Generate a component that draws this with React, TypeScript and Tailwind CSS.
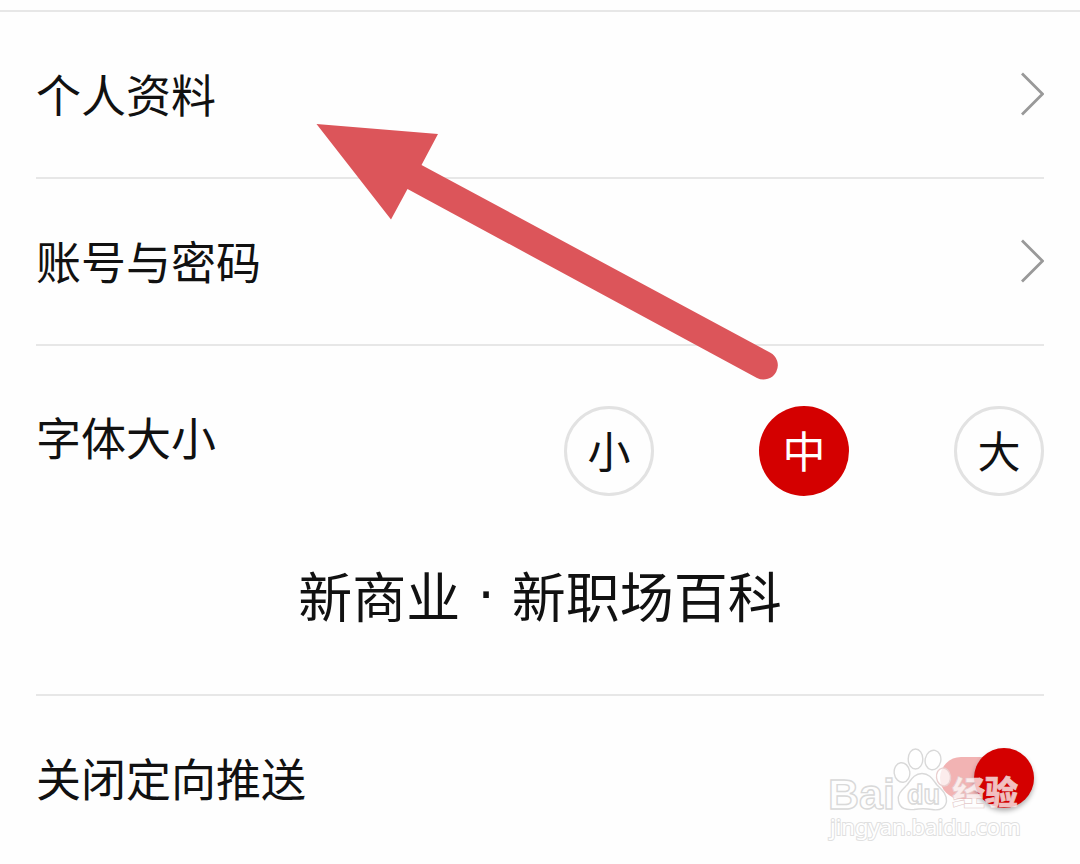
import { useState } from "react";

const SIZES = ["小", "中", "大"];

function LinkRow({ label }: { label: string }) {
  return (
    <a
      href="#"
      className="flex items-center justify-between border-b-2 border-[#e7e7e7] pt-[49px] pb-[51px] text-[45px] leading-[65px] text-[#111111]"
    >
      <span>{label}</span>
      <svg className="h-[44px] w-[24px]" viewBox="0 0 24 44" fill="none" stroke="#999999" strokeWidth="2.8" aria-hidden="true">
        <path d="M2 1.5 L22.5 22 L2 42.5" />
      </svg>
    </a>
  );
}

function SizeRow() {
  const [size, setSize] = useState("中");
  return (
    <section className="border-b-2 border-[#e7e7e7] pt-[58px] pb-[62px] text-[#111111]">
      <div className="flex items-start justify-between">
        <h2 className="text-[45px] leading-[65px]">字体大小</h2>
        <div className="mt-[2px] flex gap-[105px]" role="group" aria-label="字体大小">
          {SIZES.map((s) => (
            <button
              key={s}
              type="button"
              aria-pressed={s === size}
              onClick={() => setSize(s)}
              className={
                s === size
                  ? "flex size-[90px] items-center justify-center rounded-full bg-[#d40000] pb-[4px] text-[43px] leading-none text-white"
                  : "flex size-[90px] items-center justify-center rounded-full border-[3px] border-[#e2e2e2] pb-[4px] text-[43px] leading-none"
              }
            >
              {s}
            </button>
          ))}
        </div>
      </div>
      <p className="mt-[62px] flex h-[74px] items-center justify-center text-[54px] leading-[74px]">
        <span>新商业</span>
        <span className="font-['DejaVu_Sans',sans-serif] whitespace-pre"> · </span>
        <span>新职场百科</span>
      </p>
    </section>
  );
}

function PushRow() {
  const [on, setOn] = useState(true);
  return (
    <label className="flex items-center justify-between py-[49px] text-[45px] leading-[65px] text-[#111111]">
      <span>关闭定向推送</span>
      <span className="mr-[10px] flex h-[60px] w-[94px] items-center">
        <input type="checkbox" role="switch" className="sr-only" checked={on} onChange={() => setOn(!on)} />
        <span
          className={
            on
              ? "flex h-[42px] w-full items-center justify-end rounded-full bg-[#f2b3b3]"
              : "flex h-[42px] w-full items-center justify-start rounded-full bg-[#cccccc]"
          }
        >
          <span
            className={
              on
                ? "size-[60px] rounded-full bg-[#d40000] shadow-[0_3px_5px_rgba(0,0,0,0.3)]"
                : "size-[60px] rounded-full bg-white shadow-[0_3px_5px_rgba(0,0,0,0.3)]"
            }
          />
        </span>
      </span>
    </label>
  );
}

function Arrow() {
  return (
    <svg
      className="pointer-events-none absolute top-[124px] left-[316px] h-[258px] w-[462px]"
      viewBox="316 124 462 258"
      aria-hidden="true"
    >
      <path
        d="M316.5 124 L438 134 L421.500 165 L770 352.500 A14.300 14.300 0 0 1 757 378 L407.500 189 L391 219.500 Z"
        fill="#dc555a"
      />
    </svg>
  );
}

function Watermark() {
  return (
    <svg
      className="pointer-events-none absolute top-[744px] left-[824px] h-[104px] w-[212px]"
      viewBox="824 744 212 104"
      fill="#ffffff"
      fillOpacity="0.75"
      stroke="#d9d9d9"
      strokeWidth="1.4"
      aria-hidden="true"
    >
      <ellipse cx="902" cy="772.500" rx="7.800" ry="9.800" transform="rotate(-8 902 772.500)" />
      <ellipse cx="915.500" cy="759" rx="7.300" ry="10" />
      <ellipse cx="933" cy="760" rx="7.800" ry="9.800" transform="rotate(12 933 760)" />
      <ellipse cx="943.500" cy="777" rx="7" ry="9" stroke="#ead0d0" transform="rotate(-8 943.500 777)" />
      <path d="M922 773.500 C914 773.500 911 780 907 785 C902 790 897 794 898.500 801 C900 809 906 810 914 809.500 C920 808.500 926 808.500 932 809.500 C941 811 946 807 946.500 801 C947 794 942 790 937 785 C933 780 930 773.500 922 773.500 Z" />
      <text x="828" y="809" fontSize="43" fontWeight="700" fontFamily="'Liberation Sans', sans-serif">
        Bai
      </text>
      <text x="907" y="804" fontSize="27" fontWeight="700" fontFamily="'Liberation Sans', sans-serif">
        du
      </text>
      <text x="952" y="805" fontSize="33" fontWeight="900" stroke="#e3c8c8" strokeWidth="0.6" fontFamily="'Noto Sans CJK SC', sans-serif">
        经验
      </text>
      <text
        x="830"
        y="835"
        fontSize="22"
        fillOpacity="1"
        stroke="#e0e0e0"
        strokeWidth="2"
        paintOrder="stroke"
        fontFamily="'Noto Sans', sans-serif"
      >
        jingyan.baidu.com
      </text>
    </svg>
  );
}

export default function App() {
  return (
    <main className="relative min-h-screen bg-[#fefefe] pt-[10px] font-['Noto_Sans_CJK_SC',sans-serif]">
      <div className="border-t-2 border-[#e7e7e7] px-9">
        <LinkRow label="个人资料" />
        <LinkRow label="账号与密码" />
        <SizeRow />
        <PushRow />
      </div>
      <Arrow />
      <Watermark />
    </main>
  );
}
